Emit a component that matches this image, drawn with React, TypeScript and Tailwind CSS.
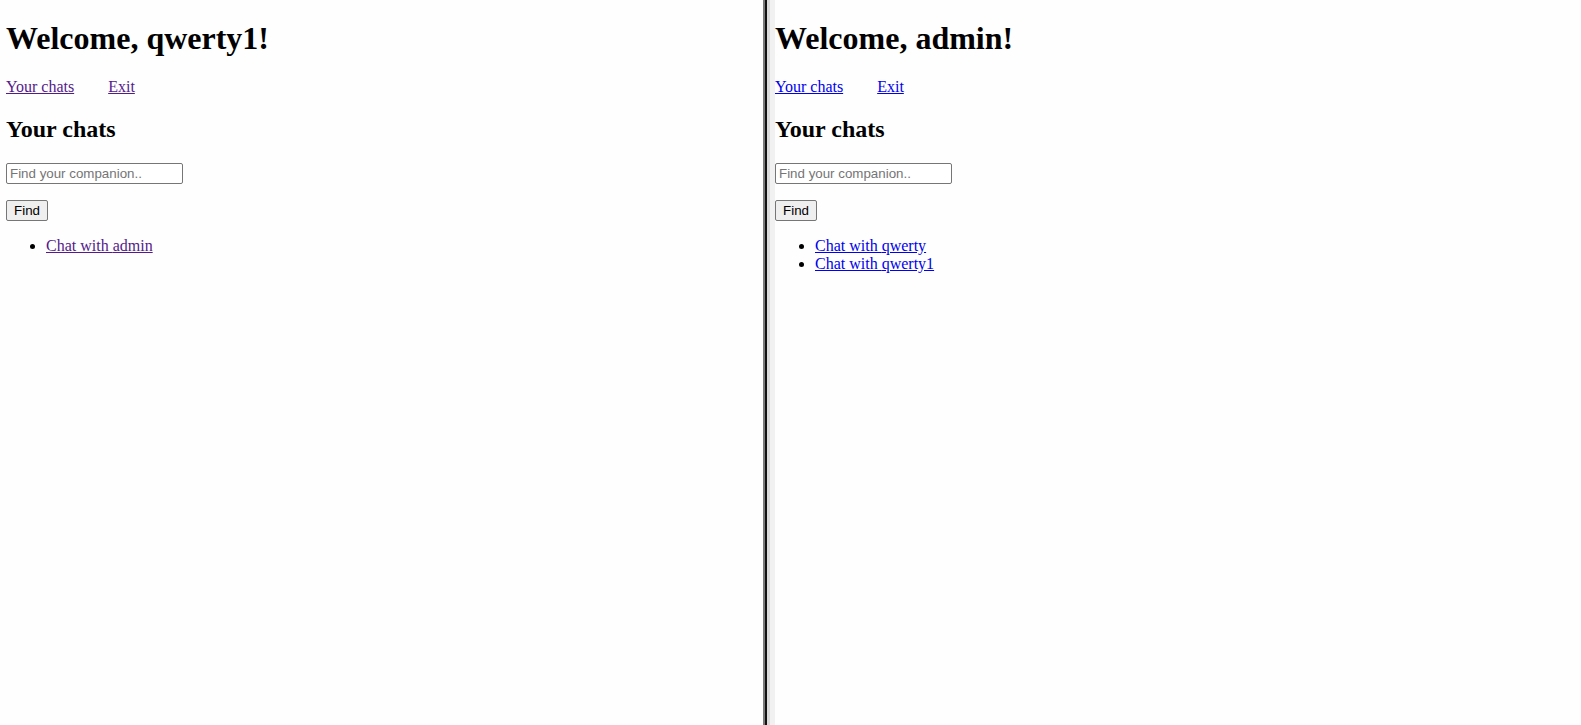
const panes = [
  { user: "qwerty1", chats: ["admin"], link: "text-[#551a8b] decoration-[#551a8b]" },
  { user: "admin", chats: ["qwerty", "qwerty1"], link: "text-[#0000ee] decoration-[#0000ee]" },
]

function ChatPage({ user, chats, link }: { user: string; chats: string[]; link: string }) {
  return (
    <div className="font-['Liberation_Serif',serif] text-black">
      <h1 className="pt-[20px] text-[32px] leading-[37px] font-bold">Welcome, {user}!</h1>
      <nav className="mt-[21px] flex gap-[34px] text-[16px] leading-[18px]">
        <a href="#" className={`underline ${link}`}>Your chats</a>
        <a href="#" className={`underline ${link}`}>Exit</a>
      </nav>
      <h2 className="mt-[19px] text-[24px] leading-[28px] font-bold">Your chats</h2>
      <input
        type="text"
        placeholder="Find your companion.."
        className="mt-[20px] block h-[21px] w-[177px] rounded-[2px] border border-[#767676] bg-white px-[3px] font-['Liberation_Sans',Arial,sans-serif] text-[13.33px] leading-[15px] placeholder:text-[#757575] outline-none"
      />
      <button className="mt-[16px] block h-[21px] w-[42px] rounded-[2px] border border-[#767676] bg-[#efefef] font-['Liberation_Sans',Arial,sans-serif] text-[13.33px] leading-[15px] text-black">
        Find
      </button>
      <ul className="mt-[16px] list-disc pl-10 text-[16px] leading-[18px]">
        {chats.map((c) => (
          <li key={c}>
            <a href="#" className={`underline ${link}`}>Chat with {c}</a>
          </li>
        ))}
      </ul>
    </div>
  )
}

export default function App() {
  return (
    <div className="flex h-[725px] w-[1581px] overflow-hidden bg-white">
      <div className="w-[763px] shrink-0 bg-[#fefefe] pl-[6px]">
        <ChatPage {...panes[0]} />
      </div>
      <div className="w-[2px] shrink-0 bg-[#7a7a7a]" />
      <div className="w-[2px] shrink-0 bg-[#111111]" />
      <div className="w-[3px] shrink-0 bg-[#dadada]" />
      <div className="flex-1 border-l-[5px] border-[#f1f1f1] bg-[#fefefe]">
        <ChatPage {...panes[1]} />
      </div>
    </div>
  )
}
